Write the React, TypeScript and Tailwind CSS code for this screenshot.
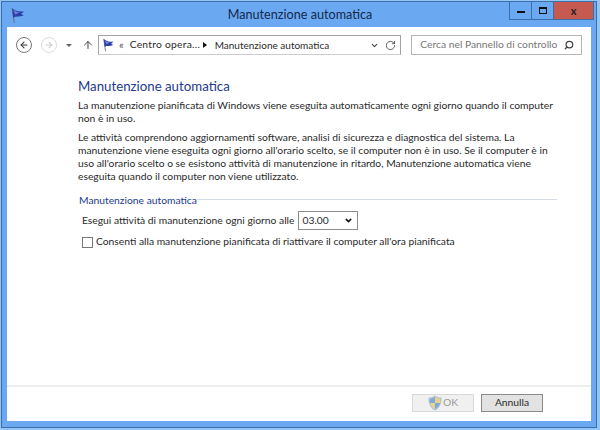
import { ChevronDown, RotateCw, Search, ArrowLeft, ArrowRight, ArrowUp } from "lucide-react";

const Flag = ({ className }: { className: string }) => (
  <svg viewBox="0 0 16 16" className={className}>
    <path d="M2 1 L4 15" stroke="#6b7280" strokeWidth="1" fill="none" />
    <path d="M2 1.5 C5 3 6 5 13 4 C12 5.5 11 6 10.5 6.5 C11.5 7 12 7.5 13 8 C9 9.5 6 8.5 3 10 Z" fill="#2f3fa8" />
    <path d="M3 2.5 C5 4 6 5 9 5 L5 7 Z" fill="#6f86e0" />
  </svg>
);

const Shield = () => (
  <svg viewBox="0 0 14 16" className="w-[14px] h-[16px]">
    <path d="M7 0.5 C9 2 11 2.5 13.5 2.5 C14 8 12 13 7 15.5 C2 13 0 8 0.5 2.5 C3 2.5 5 2 7 0.5 Z" fill="#b9c4d0" />
    <path d="M7 2 V8 H2 C1.8 6.5 1.8 5 2 3.8 C4 3.7 5.5 3 7 2 Z" fill="#7fa8dc" />
    <path d="M7 2 C8.5 3 10 3.7 12 3.8 C12.2 5 12.2 6.5 12 8 H7 Z" fill="#e8d58a" />
    <path d="M2 8 H7 V14 C4.5 12.8 2.6 10.8 2 8 Z" fill="#e8d58a" />
    <path d="M7 8 H12 C11.4 10.8 9.5 12.8 7 14 Z" fill="#7fa8dc" />
  </svg>
);

export default function App() {
  return (
    <div className="w-[600px] h-[430px] overflow-hidden bg-[#93c5f7] font-['Lato',sans-serif] text-[#2a2a2a]">
      <div className="h-[427px] w-[596px] ml-px mt-px border border-[#3d6ea5] bg-[#6aa9f2] flex flex-col">
        <div className="h-[25px] shrink-0 flex items-start pl-[8px]">
          <Flag className="w-[17px] h-[17px] mt-[5px]" />
          <div className="flex-1 text-center text-[12.65px] leading-[18px] mt-[4px] text-[#14284a] pl-[64px]">
            Manutenzione automatica
          </div>
          <div className="flex h-[18px] border border-t-0 border-[#3d6ea5] mr-[2px]">
            <div className="w-[22px] flex items-center justify-center border-r border-[#3d6ea5]">
              <div className="w-[8px] h-[2px] bg-[#111] mt-[2px]" />
            </div>
            <div className="w-[22px] flex items-center justify-center border-r border-[#3d6ea5]">
              <div className="w-[8px] h-[7px] border border-t-2 border-[#111]" />
            </div>
            <div className="w-[39px] bg-[#c75a50] flex items-center justify-center text-[11px] font-bold text-[#222] leading-none">
              x
            </div>
          </div>
        </div>

        <div className="mx-[5px] h-[394px] bg-white flex flex-col">
          <div className="h-[33px] shrink-0 flex items-center pl-[9px] pr-[9px] pt-[3px]">
            <div className="w-[16px] h-[16px] rounded-full border border-[#777] flex items-center justify-center">
              <ArrowLeft className="w-[10px] h-[10px] text-[#333]" strokeWidth={2.5} />
            </div>
            <div className="w-[16px] h-[16px] rounded-full border border-[#ddd] flex items-center justify-center ml-[9px]">
              <ArrowRight className="w-[10px] h-[10px] text-[#ccc]" strokeWidth={2.5} />
            </div>
            <div className="ml-[9px] w-0 h-0 border-x-[3px] border-x-transparent border-t-[3px] border-t-[#666]" />
            <ArrowUp className="w-[12px] h-[12px] ml-[10px] text-[#444]" strokeWidth={2} />
            <div className="ml-[4px] w-[304px] h-[20px] border border-[#a3a3a3] border-b-[#ccc] flex items-center pl-[3px] pr-[4px] text-[10.3px] whitespace-nowrap">
              <Flag className="w-[14px] h-[14px]" />
              <span className="ml-[3px] text-[#555] text-[11px]">«</span>
              <span className="ml-[6px] w-[65px] tracking-[0.25px]">Centro opera...</span>
              <div className="ml-[8px] w-0 h-0 border-y-[3px] border-y-transparent border-l-[4px] border-l-[#111]" />
              <span className="ml-[8px] text-[10px]">Manutenzione automatica</span>
              <ChevronDown className="ml-auto w-[9px] h-[9px] text-[#444]" strokeWidth={3} />
              <RotateCw className="ml-[6px] w-[11px] h-[11px] text-[#555]" />
            </div>
            <div className="ml-[10px] w-[171px] h-[20px] border border-[#b5b5b5] flex items-center pl-[8px] pr-[7px] text-[10.3px] text-[#777] whitespace-nowrap">
              <span>Cerca nel Pannello di controllo</span>
              <Search className="ml-auto w-[10px] h-[10px] text-[#444] -scale-x-100" strokeWidth={3} />
            </div>
          </div>

          <div className="flex-1 pl-[71px] pr-[34px] pt-[17px]">
            <h1 className="text-[13.25px] leading-[18px] text-[#1c3a8c] font-normal">Manutenzione automatica</h1>
            <p className="mt-[4px] text-[10.3px] leading-[13px]">
              La manutenzione pianificata di Windows viene eseguita automaticamente ogni giorno quando il computer non è in uso.
            </p>
            <p className="mt-[6px] text-[10.3px] leading-[13px]">
              Le attività comprendono aggiornamenti software, analisi di sicurezza e diagnostica del sistema. La manutenzione viene eseguita ogni giorno all'orario scelto, se il computer non è in uso. Se il computer è in uso all'orario scelto o se esistono attività di manutenzione in ritardo, Manutenzione automatica viene eseguita quando il computer non viene utilizzato.
            </p>
            <div className="mt-[11px] pl-px flex items-center text-[10.3px] leading-[13px] text-[#1c3a8c]">
              <span>Manutenzione automatica</span>
              <div className="flex-1 h-px bg-[#d5dbe2] mt-[-2px]" />
            </div>
            <div className="mt-[4px] ml-[4px] flex items-center text-[10.3px] h-[19px]">
              <span>Esegui attività di manutenzione ogni giorno alle</span>
              <div className="ml-[4px] w-[60px] h-[19px] border border-[#8c8c8c] flex items-center pl-[3px] pr-[4px]">
                <span>03.00</span>
                <ChevronDown className="ml-auto w-[9px] h-[9px] text-[#111]" strokeWidth={4} />
              </div>
            </div>
            <div className="mt-[3px] ml-[4px] flex items-center text-[10.3px] h-[18px]">
              <div className="w-[11px] h-[11px] border border-[#777] bg-white" />
              <span className="ml-[3px]">Consenti alla manutenzione pianificata di riattivare il computer all'ora pianificata</span>
            </div>
          </div>

          <div className="h-[36px] shrink-0 border-t-2 border-[#eeeeee] flex items-start justify-end pt-[7px] pr-[48px]">
            <div className="w-[62px] h-[18px] border border-[#d9d9d9] bg-[#f0f0f0] flex items-center justify-center text-[10.3px] text-[#9a9a9a]">
              <Shield />
              <span className="ml-[1px]">OK</span>
            </div>
            <div className="ml-[7px] w-[62px] h-[18px] border border-[#8a8a8a] bg-[#e2e2e2] flex items-center justify-center text-[10.3px]">
              Annulla
            </div>
          </div>
        </div>
      </div>
    </div>
  );
}
